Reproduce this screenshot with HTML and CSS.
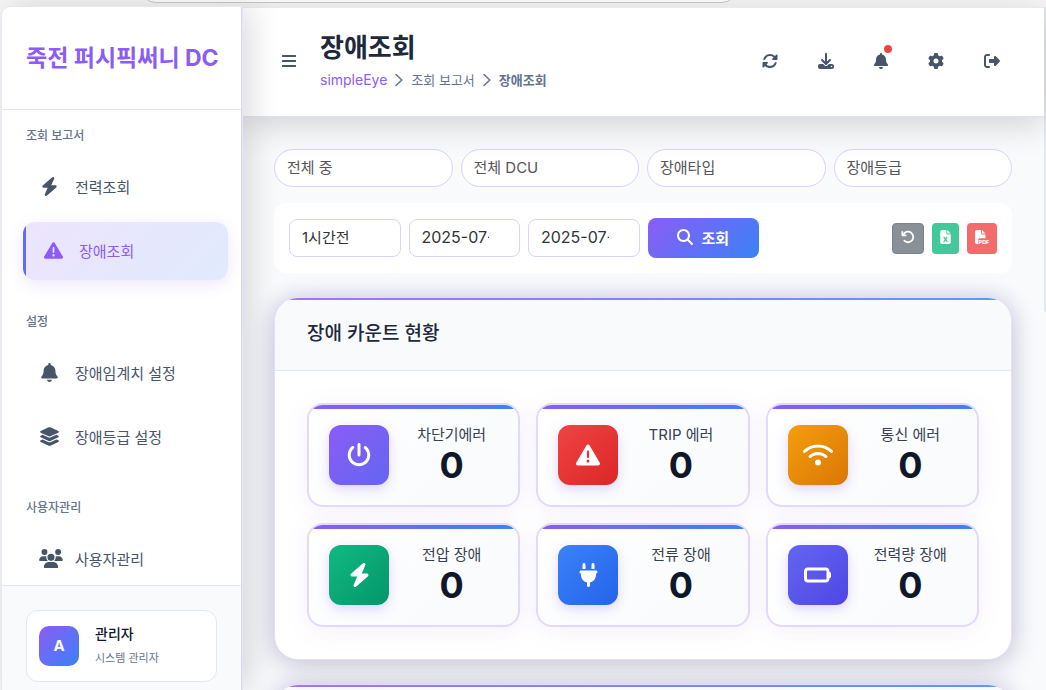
FILE: index.html
```html
<!DOCTYPE html>
<html lang="ko">
<head>
<meta charset="utf-8">
<meta name="viewport" content="width=device-width, initial-scale=1">
<title>장애조회</title>
<link rel="stylesheet" href="styles.css">
</head>
<body>
<svg class="sprite" aria-hidden="true">
  <symbol id="bolt" viewBox="0 0 448 512"><path d="M349.4 44.6c5.9-13.7 1.5-29.7-10.6-38.5s-28.6-8-39.9 1.8l-256 224c-10 8.8-13.6 22.9-8.9 35.3S50.7 288 64 288H175.5L98.6 467.4c-5.9 13.7-1.5 29.7 10.6 38.5s28.6 8 39.9-1.8l256-224c10-8.8 13.6-22.9 8.9-35.3s-16.6-20.7-30-20.7H272.5L349.4 44.6z"/></symbol>
  <symbol id="warning" viewBox="0 0 512 512"><path d="M256 32c14.2 0 27.3 7.5 34.5 19.8l216 368c7.3 12.4 7.3 27.7 .2 40.1S486.3 480 472 480H40c-14.3 0-27.6-7.7-34.7-20.1s-7-27.8 .2-40.1l216-368C228.7 39.5 241.8 32 256 32zm0 128c-13.3 0-24 10.7-24 24V296c0 13.3 10.7 24 24 24s24-10.7 24-24V184c0-13.3-10.7-24-24-24zm32 224a32 32 0 1 0 -64 0 32 32 0 1 0 64 0z"/></symbol>
  <symbol id="bell" viewBox="0 0 448 512"><path d="M224 0c-17.7 0-32 14.3-32 32V51.2C119 66 64 130.6 64 208v18.8c0 47-17.3 92.4-48.5 127.6l-7.4 8.3c-8.4 9.4-10.4 22.9-5.3 34.4S19.4 416 32 416H416c12.6 0 24-7.4 29.2-18.9s3.1-25-5.3-34.4l-7.4-8.3C401.3 319.2 384 273.9 384 226.8V208c0-77.4-55-142-128-156.8V32c0-17.7-14.3-32-32-32zm45.3 493.3c12-12 18.7-28.3 18.7-45.3H224 160c0 17 6.7 33.3 18.7 45.3s28.3 18.7 45.3 18.7s33.3-6.7 45.3-18.7z"/></symbol>
  <symbol id="layers" viewBox="0 0 576 512"><path d="M264.5 5.2c14.9-6.9 32.1-6.9 47 0l218.6 101c8.5 3.9 13.9 12.4 13.9 21.8s-5.4 17.9-13.9 21.8l-218.6 101c-14.9 6.9-32.1 6.9-47 0L45.9 149.8C37.4 145.8 32 137.3 32 128s5.4-17.9 13.9-21.8L264.5 5.2zM476.9 209.6l53.2 24.6c8.5 3.9 13.9 12.4 13.9 21.8s-5.4 17.9-13.9 21.8l-218.6 101c-14.9 6.9-32.1 6.9-47 0L45.9 277.8C37.4 273.8 32 265.3 32 256s5.4-17.9 13.9-21.8l53.2-24.6 152 70.2c23.4 10.8 50.4 10.8 73.8 0l152-70.2zm-152 198.2l152-70.2 53.2 24.6c8.5 3.9 13.9 12.4 13.9 21.8s-5.4 17.9-13.9 21.8l-218.6 101c-14.9 6.9-32.1 6.9-47 0L45.9 405.8C37.4 401.8 32 393.3 32 384s5.4-17.9 13.9-21.8l53.2-24.6 152 70.2c23.4 10.8 50.4 10.8 73.8 0z"/></symbol>
  <symbol id="users" viewBox="0 0 640 512"><path d="M144 0a80 80 0 1 1 0 160A80 80 0 1 1 144 0zM512 0a80 80 0 1 1 0 160A80 80 0 1 1 512 0zM0 298.7C0 239.8 47.8 192 106.7 192h42.7c15.9 0 31 3.5 44.6 9.7c-1.3 7.2-1.9 14.7-1.9 22.3c0 38.2 16.8 72.5 43.3 96c-.2 0-.4 0-.7 0H21.3C9.6 320 0 310.4 0 298.7zM405.3 320c-.2 0-.4 0-.7 0c26.6-23.5 43.3-57.8 43.3-96c0-7.6-.7-15-1.9-22.3c13.6-6.3 28.7-9.7 44.6-9.7h42.7C592.2 192 640 239.8 640 298.7c0 11.8-9.6 21.3-21.3 21.3H405.3zM224 224a96 96 0 1 1 192 0 96 96 0 1 1 -192 0zM128 485.3C128 411.7 187.7 352 261.3 352H378.7C452.3 352 512 411.7 512 485.3c0 14.7-11.9 26.7-26.7 26.7H154.7c-14.7 0-26.7-11.9-26.7-26.7z"/></symbol>
  <symbol id="bars" viewBox="0 0 448 512"><path d="M24 64H424a24 24 0 0 1 0 64H24a24 24 0 0 1 0-64zM24 224H424a24 24 0 0 1 0 64H24a24 24 0 0 1 0-64zM24 384H424a24 24 0 0 1 0 64H24a24 24 0 0 1 0-64z"/></symbol>
  <symbol id="sync" viewBox="0 0 512 512"><path d="M142.9 142.9c62.2-62.2 162.7-62.5 225.3-1L327 183c-6.9 6.9-8.9 17.2-5.2 26.2s12.5 14.8 22.2 14.8H463.5H472c13.3 0 24-10.7 24-24V72c0-9.7-5.8-18.5-14.8-22.2s-19.3-1.7-26.2 5.2L413.4 96.6c-87.6-86.5-228.7-86.2-315.8 1C73.2 122 55.6 150.7 44.8 181.4c-5.9 16.7 2.9 34.9 19.5 40.8s34.9-2.9 40.8-19.5c7.7-21.8 20.2-42.3 37.8-59.8zM16 312v7.6 .7V440c0 9.7 5.8 18.5 14.8 22.2s19.3 1.7 26.2-5.2l41.6-41.6c87.6 86.5 228.7 86.2 315.8-1c24.4-24.4 42.1-53.1 52.9-83.7c5.9-16.7-2.9-34.9-19.5-40.8s-34.9 2.9-40.8 19.5c-7.7 21.8-20.2 42.3-37.8 59.8c-62.2 62.2-162.7 62.5-225.3 1L185 329c6.9-6.9 8.9-17.2 5.2-26.2s-12.5-14.8-22.2-14.8H48.4h-.7H40c-13.3 0-24 10.7-24 24z"/></symbol>
  <symbol id="download" viewBox="0 0 512 512"><path d="M288 32c0-17.7-14.3-32-32-32s-32 14.3-32 32V274.7l-73.4-73.4c-12.5-12.5-32.8-12.5-45.3 0s-12.5 32.8 0 45.3l128 128c12.5 12.5 32.8 12.5 45.3 0l128-128c12.5-12.5 12.5-32.8 0-45.3s-32.8-12.5-45.3 0L288 274.7V32zM64 352c-35.3 0-64 28.7-64 64v32c0 35.3 28.7 64 64 64H448c35.3 0 64-28.7 64-64V416c0-35.3-28.7-64-64-64H346.5l-45.3 45.3c-25 25-65.5 25-90.5 0L165.5 352H64zm368 56a24 24 0 1 1 0 48 24 24 0 1 1 0-48z"/></symbol>
  <symbol id="gear" viewBox="0 0 512 512"><path d="M495.9 166.6c3.2 8.7 .5 18.4-6.4 24.6l-43.3 39.4c1.1 8.3 1.7 16.8 1.7 25.4s-.6 17.1-1.7 25.4l43.3 39.4c6.9 6.2 9.6 15.9 6.4 24.6c-4.4 11.9-9.7 23.3-15.8 34.3l-4.7 8.1c-6.6 11-14 21.4-22.1 31.2c-5.9 7.2-15.7 9.6-24.5 6.8l-55.7-17.7c-13.4 10.3-28.2 18.9-44 25.4l-12.5 57.1c-2 9.1-9 16.3-18.2 17.8c-13.8 2.3-28 3.5-42.5 3.5s-28.7-1.2-42.5-3.5c-9.2-1.5-16.2-8.7-18.2-17.8l-12.5-57.1c-15.8-6.5-30.6-15.1-44-25.4L83.1 425.9c-8.8 2.8-18.6 .3-24.5-6.8c-8.1-9.8-15.5-20.2-22.1-31.2l-4.7-8.1c-6.1-11-11.4-22.4-15.8-34.3c-3.2-8.7-.5-18.4 6.4-24.6l43.3-39.4C64.6 273.1 64 264.6 64 256s.6-17.1 1.7-25.4L22.4 191.2c-6.9-6.2-9.6-15.9-6.4-24.6c4.4-11.9 9.7-23.3 15.8-34.3l4.7-8.1c6.6-11 14-21.4 22.1-31.2c5.9-7.2 15.7-9.6 24.5-6.8l55.7 17.7c13.4-10.3 28.2-18.9 44-25.4l12.5-57.1c2-9.1 9-16.3 18.2-17.8C227.3 1.2 241.5 0 256 0s28.7 1.2 42.5 3.5c9.2 1.5 16.2 8.7 18.2 17.8l12.5 57.1c15.8 6.5 30.6 15.1 44 25.4l55.7-17.7c8.8-2.8 18.6-.3 24.5 6.8c8.1 9.8 15.5 20.2 22.1 31.2l4.7 8.1c6.1 11 11.4 22.4 15.8 34.3zM256 336a80 80 0 1 0 0-160 80 80 0 1 0 0 160z"/></symbol>
  <symbol id="logout" viewBox="0 0 512 512"><path d="M377.9 105.9L500.7 228.7c7.2 7.2 11.3 17.1 11.3 27.3s-4.1 20.1-11.3 27.3L377.9 406.1c-6.4 6.4-15 9.9-24 9.9c-18.7 0-33.9-15.2-33.9-33.9l0-62.1-128 0c-17.7 0-32-14.3-32-32l0-64c0-17.7 14.3-32 32-32l128 0 0-62.1c0-18.7 15.2-33.9 33.9-33.9c9 0 17.6 3.6 24 9.9zM160 96L96 96c-17.7 0-32 14.3-32 32l0 256c0 17.7 14.3 32 32 32l64 0c17.7 0 32 14.3 32 32s-14.3 32-32 32l-64 0c-53 0-96-43-96-96L0 128C0 75 43 32 96 32l64 0c17.7 0 32 14.3 32 32s-14.3 32-32 32z"/></symbol>
  <symbol id="search" viewBox="0 0 512 512"><path d="M416 208c0 45.9-14.9 88.3-40 122.7L502.6 457.4c12.5 12.5 12.5 32.8 0 45.3s-32.8 12.5-45.3 0L330.7 376c-34.4 25.2-76.8 40-122.7 40C93.1 416 0 322.9 0 208S93.1 0 208 0S416 93.1 416 208zM208 352a144 144 0 1 0 0-288 144 144 0 1 0 0 288z"/></symbol>
  <symbol id="undo" viewBox="0 0 512 512"><path d="M125.7 160H176c17.7 0 32 14.3 32 32s-14.3 32-32 32H48c-17.7 0-32-14.3-32-32V64c0-17.7 14.3-32 32-32s32 14.3 32 32v51.2L97.6 97.6c87.5-87.5 229.3-87.5 316.8 0s87.5 229.3 0 316.8s-229.3 87.5-316.8 0c-12.5-12.5-12.5-32.8 0-45.3s32.8-12.5 45.3 0c62.5 62.5 163.8 62.5 226.3 0s62.5-163.8 0-226.3s-163.8-62.5-226.3 0L125.7 160z"/></symbol>
  <symbol id="excel" viewBox="0 0 384 512"><path d="M64 0C28.7 0 0 28.7 0 64V448c0 35.3 28.7 64 64 64H320c35.3 0 64-28.7 64-64V160H256c-17.7 0-32-14.3-32-32V0H64zM256 0V128H384L256 0zM155.7 250.2L192 302.1l36.3-51.9c7.6-10.9 22.6-13.5 33.4-5.9s13.5 22.6 5.9 33.4L221.3 344l46.4 66.2c7.6 10.9 5 25.8-5.9 33.4s-25.8 5-33.4-5.9L192 385.8l-36.3 51.9c-7.6 10.9-22.6 13.5-33.4 5.9s-13.5-22.6-5.9-33.4L162.7 344l-46.4-66.2c-7.6-10.9-5-25.8 5.9-33.4s25.8-5 33.4 5.9z"/></symbol>
  <symbol id="pdf" viewBox="0 0 512 512"><path d="M0 64C0 28.7 28.7 0 64 0H224V128c0 17.7 14.3 32 32 32H384V304H176c-35.3 0-64 28.7-64 64V512H64c-35.3 0-64-28.7-64-64V64zm384 64H256V0L384 128z"/><text class="pdf-label" x="132" y="506">PDF</text></symbol>
  <symbol id="power" viewBox="0 0 512 512"><path d="M288 32c0-17.7-14.3-32-32-32s-32 14.3-32 32V256c0 17.7 14.3 32 32 32s32-14.3 32-32V32zM143.5 120.6c13.6-11.3 15.4-31.5 4.1-45.1s-31.5-15.4-45.1-4.1C49.7 115.4 16 181.8 16 256c0 132.5 107.5 240 240 240s240-107.5 240-240c0-74.2-33.8-140.6-86.6-184.6c-13.6-11.3-33.8-9.4-45.1 4.1s-9.4 33.8 4.1 45.1c38.9 32.3 63.5 81 63.5 135.4c0 97.2-78.8 176-176 176s-176-78.8-176-176c0-54.4 24.7-103.1 63.5-135.4z"/></symbol>
  <symbol id="wifi" viewBox="0 0 640 512"><path d="M54.2 202.9C123.2 136.7 216.8 96 320 96s196.8 40.7 265.8 106.9c12.8 12.2 33 11.8 45.2-.9s11.8-33-.9-45.2C549.7 79.5 440.4 32 320 32S90.3 79.5 9.8 156.7C-2.9 169-3.3 189.2 8.9 202s32.5 13.2 45.2 .9zM320 256c56.8 0 108.6 21.1 148.2 56c13.3 11.7 33.5 10.4 45.2-2.8s10.4-33.5-2.8-45.2C459.8 219.2 393 192 320 192s-139.8 27.2-190.5 72c-13.3 11.7-14.5 31.9-2.8 45.2s31.9 14.5 45.2 2.8c39.5-34.9 91.3-56 148.2-56zm64 160a64 64 0 1 0 -128 0 64 64 0 1 0 128 0z"/></symbol>
  <symbol id="plug" viewBox="0 0 384 512"><path d="M96 0C78.3 0 64 14.3 64 32v96h64V32c0-17.7-14.3-32-32-32zM288 0c-17.7 0-32 14.3-32 32v96h64V32c0-17.7-14.3-32-32-32zM32 160c-17.7 0-32 14.3-32 32s14.3 32 32 32v32c0 77.4 55 142 128 156.8V480c0 17.7 14.3 32 32 32s32-14.3 32-32V412.8C297 398 352 333.4 352 256V224c17.7 0 32-14.3 32-32s-14.3-32-32-32H32z"/></symbol>
  <symbol id="battery" viewBox="0 0 576 512"><path d="M80 160c-8.8 0-16 7.2-16 16V336c0 8.8 7.2 16 16 16H464c8.8 0 16-7.2 16-16V176c0-8.8-7.2-16-16-16H80zM0 176c0-44.2 35.8-80 80-80H464c44.2 0 80 35.8 80 80v16c17.7 0 32 14.3 32 32v64c0 17.7-14.3 32-32 32v16c0 44.2-35.8 80-80 80H80c-44.2 0-80-35.8-80-80V176z"/></symbol>
  <symbol id="chevron" viewBox="0 0 8 14"><path d="M1 1.5 L6.8 7 L1 12.5" fill="none" stroke="currentColor" stroke-width="1.6" stroke-linecap="round" stroke-linejoin="round"/></symbol>
</svg>

<div class="topstrip"><div class="topstrip-pill"></div></div>
<div class="app">
  <aside class="sidebar">
    <div class="brand">죽전 퍼시픽써니 DC</div>
    <nav class="nav">
      <section class="nav-group">
        <h2 class="nav-title">조회 보고서</h2>
        <a class="nav-item" href="#"><span class="nav-icon"><svg class="w17"><use href="#bolt"/></svg></span>전력조회</a>
        <a class="nav-item active" href="#" aria-current="page"><span class="nav-icon"><svg class="w19"><use href="#warning"/></svg></span>장애조회</a>
      </section>
      <section class="nav-group">
        <h2 class="nav-title">설정</h2>
        <a class="nav-item" href="#"><span class="nav-icon"><svg class="w17"><use href="#bell"/></svg></span>장애임계치 설정</a>
        <a class="nav-item" href="#"><span class="nav-icon"><svg class="w21"><use href="#layers"/></svg></span>장애등급 설정</a>
      </section>
      <section class="nav-group">
        <h2 class="nav-title">사용자관리</h2>
        <a class="nav-item" href="#"><span class="nav-icon"><svg class="w24"><use href="#users"/></svg></span>사용자관리</a>
      </section>
    </nav>
    <div class="sidebar-foot">
      <div class="user">
        <div class="avatar">A</div>
        <div class="user-text"><div class="user-name">관리자</div><div class="user-role">시스템 관리자</div></div>
      </div>
    </div>
  </aside>

  <div class="content">
    <header class="header">
      <button class="menu-btn" type="button" aria-label="메뉴"><svg><use href="#bars"/></svg></button>
      <div class="heading">
        <h1>장애조회</h1>
        <nav class="crumbs"><a href="#">simpleEye</a><svg><use href="#chevron"/></svg><span>조회 보고서</span><svg><use href="#chevron"/></svg><strong>장애조회</strong></nav>
      </div>
      <div class="actions">
        <button type="button" aria-label="새로고침"><svg><use href="#sync"/></svg></button>
        <button type="button" aria-label="다운로드"><svg><use href="#download"/></svg></button>
        <button type="button" class="notify" aria-label="알림"><svg class="narrow"><use href="#bell"/></svg></button>
        <button type="button" aria-label="환경설정"><svg><use href="#gear"/></svg></button>
        <button type="button" aria-label="로그아웃"><svg><use href="#logout"/></svg></button>
      </div>
    </header>

    <main class="main">
      <div class="filters">
        <select class="pill" aria-label="중"><option>전체 중</option></select>
        <select class="pill" aria-label="DCU"><option>전체 DCU</option></select>
        <select class="pill" aria-label="타입"><option>장애타입</option></select>
        <select class="pill" aria-label="등급"><option>장애등급</option></select>
      </div>
      <form class="searchbar">
        <div class="search-fields">
          <select class="field" aria-label="기간"><option>1시간전</option></select>
          <input class="field" type="text" aria-label="시작일" value="2025-07-24">
          <input class="field" type="text" aria-label="종료일" value="2025-07-24">
          <button class="search-btn" type="button"><svg><use href="#search"/></svg>조회</button>
        </div>
        <div class="exports">
          <button class="reset" type="button" aria-label="초기화"><svg><use href="#undo"/></svg></button>
          <button class="xls" type="button" aria-label="엑셀"><svg><use href="#excel"/></svg></button>
          <button class="pdf" type="button" aria-label="문서"><svg><use href="#pdf"/></svg></button>
        </div>
      </form>

      <section class="card">
        <div class="card-head"><h2>장애 카운트 현황</h2></div>
        <div class="tiles">
          <div class="tile"><div class="tile-icon violet"><svg class="w24"><use href="#power"/></svg></div><div class="tile-text"><div class="label">차단기에러</div><div class="count">0</div></div></div>
          <div class="tile"><div class="tile-icon red"><svg class="w24"><use href="#warning"/></svg></div><div class="tile-text"><div class="label">TRIP 에러</div><div class="count">0</div></div></div>
          <div class="tile"><div class="tile-icon amber"><svg class="w30"><use href="#wifi"/></svg></div><div class="tile-text"><div class="label">통신 에러</div><div class="count">0</div></div></div>
          <div class="tile"><div class="tile-icon green"><svg class="w21"><use href="#bolt"/></svg></div><div class="tile-text"><div class="label">전압 장애</div><div class="count">0</div></div></div>
          <div class="tile"><div class="tile-icon blue"><svg class="w19"><use href="#plug"/></svg></div><div class="tile-text"><div class="label">전류 장애</div><div class="count">0</div></div></div>
          <div class="tile"><div class="tile-icon indigo"><svg class="w27"><use href="#battery"/></svg></div><div class="tile-text"><div class="label">전력량 장애</div><div class="count">0</div></div></div>
        </div>
      </section>
      <section class="card"><div class="card-head"></div></section>
    </main>
  </div>
  <div class="rail"><div class="rail-thumb"></div></div>
</div>
</body>
</html>
```
FILE: styles.css
```css
* { box-sizing: border-box; }
body {
  margin: 0;
  height: 100vh;
  overflow: hidden;
  display: flex;
  flex-direction: column;
  background: #f5f5f5;
  color: #1e293b;
  font-family: Inter, "Noto Sans CJK KR", sans-serif;
  font-size: 15px;
}
h1, h2 { margin: 0; }
a { color: inherit; text-decoration: none; }
button, input, select { font: inherit; margin: 0; }
button { border: 0; padding: 0; background: none; display: flex; align-items: center; justify-content: center; }
svg { display: block; fill: currentColor; flex: none; }
.sprite { position: absolute; width: 0; height: 0; }

.topstrip { flex: none; height: 7px; padding: 0 30% 0 14%; overflow: hidden; display: flex; align-items: flex-end; }
.topstrip-pill { flex: 1; height: 32px; margin: 0 -6px 4px; border: 1px solid #c8c8c8; border-radius: 16px; background: #fff; }

.app { flex: 1; min-height: 0; display: flex; padding-left: 2px; }

.sidebar {
  flex: none;
  width: 240px;
  display: flex;
  flex-direction: column;
  background: #fff;
  border-right: 1px solid #d9d3f5;
  border-radius: 8px 0 0 0;
  box-shadow: 0 0 0 1px #e8e6f2, 8px 0 32px rgba(0, 0, 0, 0.15);
  position: relative;
  z-index: 3;
}
.brand {
  flex: none;
  height: 103px;
  padding: 0 24px;
  line-height: 102px;
  white-space: nowrap;
  font-size: 23px;
  font-weight: 700;
  color: #8b5cf6;
  border-bottom: 1px solid #e2e4f2;
}
.nav { flex: 1; min-height: 0; overflow: hidden; padding: 16px 13px 0 21px; }
.nav-group { margin-bottom: 32px; }
.nav-title { margin: 0 3px 12px; line-height: 20px; font-size: 12px; font-weight: 500; color: #64748b; }
.nav-item {
  position: relative;
  display: flex;
  align-items: center;
  gap: 16px;
  height: 58px;
  margin-bottom: 6px;
  padding: 0 16px 2px;
  border-radius: 12px;
  overflow: hidden;
  color: #475569;
}
.nav-item:last-child { margin-bottom: 0; }
.nav-item.active {
  padding-left: 20px;
  color: #8b5cf6;
  background: linear-gradient(135deg, #ede4fc, #e0eafe);
  box-shadow: 0 4px 16px rgba(139, 92, 246, 0.15);
}
.nav-item.active::before { content: ""; position: absolute; inset: 0 auto 0 0; width: 3px; background: #5f6bf6; }
.nav-icon { width: 20px; display: flex; justify-content: safe center; }
.nav-icon svg { height: 19px; }
.w17 { width: 17px; }
.w19 { width: 19px; }
.w21 { width: 21px; }
.w24 { width: 24px; }
.w27 { width: 27px; }
.w30 { width: 30px; }

.sidebar-foot { flex: none; padding: 24px 24px 8px; background: #f8fafc; border-top: 1px solid #e2e4f2; }
.user { display: flex; align-items: center; gap: 16px; padding: 15px 12px; border: 1px solid #e2e8f0; border-radius: 12px; background: #fff; }
.avatar {
  width: 40px;
  height: 40px;
  border-radius: 10px;
  background: linear-gradient(135deg, #8b5cf6, #3b82f6);
  color: #fff;
  font-weight: 700;
  line-height: 40px;
  text-align: center;
}
.user-text { display: flex; flex-direction: column; gap: 8px; }
.user-name { font-size: 14px; line-height: 16px; font-weight: 500; color: #0f172a; }
.user-role { font-size: 11px; line-height: 16px; color: #64748b; }

.content { flex: 1; min-width: 0; display: flex; flex-direction: column; background: #f8fafc; }
.header {
  flex: none;
  height: 110px;
  display: flex;
  align-items: center;
  gap: 16px;
  padding: 0 32px 2px;
  background: #fff;
  border-top: 1px solid #eae8f5;
  border-bottom: 1px solid #e4dff7;
  box-shadow: 0 8px 32px rgba(0, 0, 0, 0.16);
  color: #475569;
  position: relative;
  z-index: 2;
}
.menu-btn { width: 30px; height: 32px; color: inherit; }
.menu-btn svg { width: 14px; height: 16px; }
.heading { flex: 1; display: flex; flex-direction: column; gap: 2px; }
.heading h1 { font-size: 26px; line-height: 36px; font-weight: 700; color: #1e293b; }
.crumbs { display: flex; align-items: center; gap: 8px; line-height: 24px; font-size: 13px; color: #64748b; }
.crumbs a { font-size: 14px; color: #8b5cf6; }
.crumbs svg { width: 8px; height: 14px; }
.actions { display: flex; gap: 16px; }
.actions button { padding: 12px; color: inherit; position: relative; }
.actions svg { width: 16px; height: 16px; }
.actions .narrow { width: 14px; }
.notify::after { content: ""; position: absolute; top: 4px; right: 8px; width: 8px; height: 8px; border-radius: 50%; background: #ef4444; }

.main { flex: 1; min-height: 0; overflow: hidden; padding: 32px 32px 0; }
.filters { display: grid; grid-template-columns: repeat(4, 1fr); gap: 8px; }
.pill, .field {
  appearance: none;
  min-width: 0;
  height: 38px;
  padding: 0 32px 2px 12px;
  border: 1px solid #ddd0fb;
  border-radius: 20px;
  background: #fff;
  color: #555;
  outline: 0;
}
.searchbar { display: flex; align-items: center; justify-content: space-between; margin: 16px 0 24px; padding: 15px; border-radius: 12px; background: #fff; }
.search-fields { flex: 0 1 470px; display: grid; grid-template-columns: repeat(4, 1fr); gap: 8px; align-items: center; }
.field { border-radius: 8px; color: #333; }
input.field { font-size: 16px; padding-right: 30px; }
.search-btn { height: 40px; gap: 8px; padding-bottom: 2px; border-radius: 8px; background: linear-gradient(135deg, #8b5cf6, #3b82f6); color: #fff; font-weight: 700; }
.search-btn svg { width: 16px; height: 16px; }
.exports { display: flex; gap: 8px; }
.exports button { height: 31px; padding: 0 8px 2px; border-radius: 4px; color: #fff; }
.exports svg { height: 14px; width: 14px; }
.exports .reset { background: #899097; border: 1px solid #7c848b; }
.exports .xls { background: #42c89b; }
.exports .xls svg { width: 11px; }
.exports .pdf { background: #f36b6b; }
.pdf-label { font: 800 200px Inter, sans-serif; }

.card {
  position: relative;
  margin-bottom: 24px;
  border: 1px solid #e6dffa;
  border-radius: 24px;
  overflow: hidden;
  background: #fff;
  box-shadow: 0 0 20px rgba(109, 72, 200, 0.22), 0 8px 32px rgba(0, 0, 0, 0.12);
}
.card::before { content: ""; position: absolute; inset: 0 0 auto; height: 2px; background: linear-gradient(90deg, #a473f5, #5f96f8); }
.card-head { height: 73px; padding: 0 32px; background: #f8fafc; border-bottom: 1px solid #e2e8f0; }
.card-head h2 { line-height: 72px; font-size: 19px; font-weight: 500; color: #1e293b; }
.tiles { display: grid; grid-template-columns: repeat(3, 1fr); gap: 16px; padding: 32px; }
.tile {
  position: relative;
  display: flex;
  gap: 16px;
  padding: 20px;
  border: 2px solid #e2d9fb;
  border-radius: 16px;
  overflow: hidden;
  background: linear-gradient(135deg, #fff, #f8fafc);
  box-shadow: 0 4px 24px rgba(139, 92, 246, 0.09);
}
.tile::before { content: ""; position: absolute; inset: 0 0 auto; height: 4px; background: linear-gradient(90deg, #8b5cf6, #3b82f6); }
.tile-icon { flex: none; width: 60px; height: 60px; display: flex; align-items: center; justify-content: center; border-radius: 12px; color: #fff; box-shadow: 0 4px 12px rgba(139, 92, 246, 0.25); }
.tile-icon svg { height: 24px; }
.violet { background: linear-gradient(135deg, #8b5cf6, #6366f1); }
.red { background: linear-gradient(135deg, #ef4444, #dc2626); }
.amber { background: linear-gradient(135deg, #f59e0b, #d97706); }
.green { background: linear-gradient(135deg, #10b981, #059669); }
.blue { background: linear-gradient(135deg, #3b82f6, #2563eb); }
.indigo { background: linear-gradient(135deg, #6366f1, #4f46e5); }
.tile-text { flex: 1; text-align: center; white-space: nowrap; }
.label { line-height: 20px; color: #374151; }
.count { line-height: 40px; font-size: 36px; font-weight: 700; color: #0f172a; }

.rail { flex: none; width: 2px; background: #f8fafc; }
.rail-thumb { height: 305px; background: #e2e8f0; border-radius: 0 0 0 2px; }
```
